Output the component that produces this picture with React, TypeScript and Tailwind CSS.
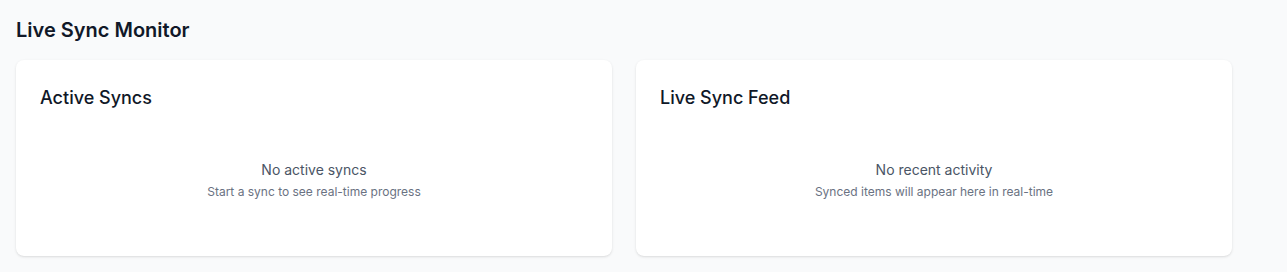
export default function App() {
  const panels = [
    {
      title: "Active Syncs",
      empty: "No active syncs",
      hint: "Start a sync to see real-time progress",
    },
    {
      title: "Live Sync Feed",
      empty: "No recent activity",
      hint: "Synced items will appear here in real-time",
    },
  ];

  return (
    <div className="min-h-screen bg-gray-50 p-4 font-['Inter',sans-serif]">
      <h2 className="mb-4 text-xl font-semibold leading-7 text-gray-900">Live Sync Monitor</h2>
      <div className="grid w-[1216px] grid-cols-2 gap-6">
        {panels.map((p) => (
          <div key={p.title} className="rounded-lg bg-white p-6 shadow">
            <h3 className="mb-4 text-lg font-medium leading-7 text-gray-900">{p.title}</h3>
            <div className="py-8 text-center">
              <p className="text-sm leading-5 text-gray-600">{p.empty}</p>
              <p className="mt-1 text-xs leading-4 text-gray-500">{p.hint}</p>
            </div>
          </div>
        ))}
      </div>
    </div>
  );
}
